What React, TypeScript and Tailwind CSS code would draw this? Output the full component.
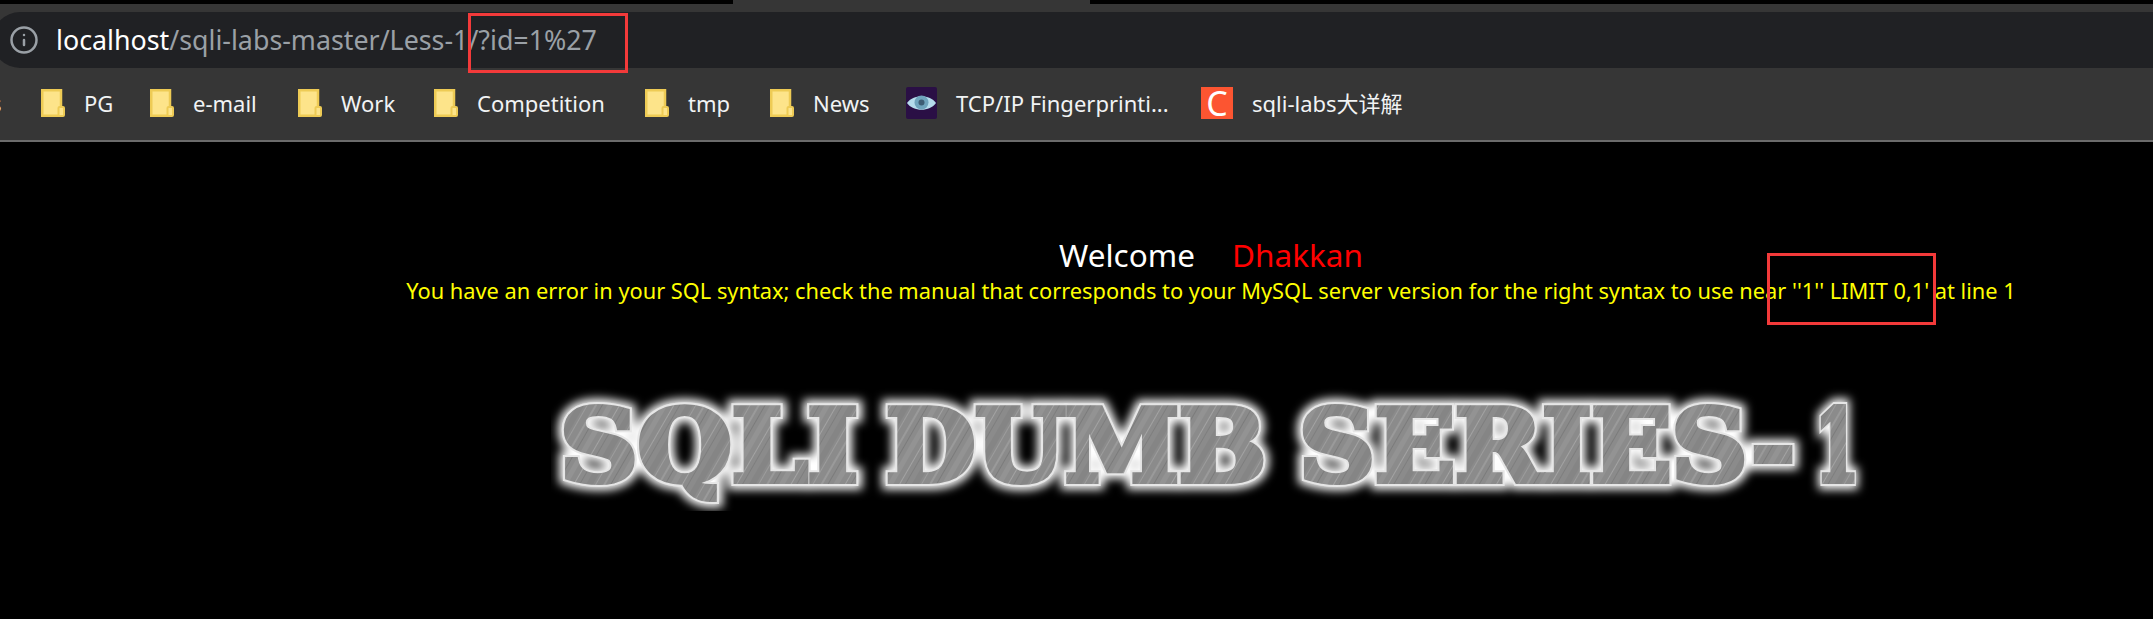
import { Info } from 'lucide-react';

const uiFont = "font-['Noto_Sans','Noto_Sans_CJK_SC',sans-serif]";

function Folder() {
  return (
    <svg width="24" height="28" viewBox="0 0 24 28" className="shrink-0">
      <path d="M1.25 1.25H20V26.75H1.25Z" fill="#fde48a" stroke="#eecb55" strokeWidth="2.5" />
      <rect x="17.5" y="18" width="5.5" height="9" rx="1" fill="#fde48a" stroke="#eecb55" strokeWidth="2" />
    </svg>
  );
}

function EyeIcon() {
  return (
    <svg width="31" height="32" viewBox="0 0 31 32" className="shrink-0">
      <rect width="31" height="32" rx="2" fill="#2a0f45" />
      <path d="M1 16C7 7 24 7 30 16C24 25 7 25 1 16Z" fill="#b5dcec" />
      <circle cx="15.5" cy="15.5" r="7" fill="#6fa4bd" />
      <circle cx="15.5" cy="15.5" r="3" fill="#3d5d74" />
    </svg>
  );
}

function Bookmark({ label, icon, width }: { label: string; icon: React.ReactNode; width: string }) {
  return (
    <div className={`flex shrink-0 items-center gap-[19px] ${width}`}>
      {icon}
      <span className="text-[22px] whitespace-nowrap text-[#f1f3f4]">{label}</span>
    </div>
  );
}

const logoWords = [
  { text: 'SQLI', x: 9, len: 298 },
  { text: 'DUMB', x: 335, len: 380 },
  { text: 'SERIES-', x: 748, len: 496 },
  { text: '1', x: 1264, len: 44 },
];

function LogoLayer(props: React.SVGProps<SVGTextElement>) {
  return (
    <>
      {logoWords.map((w) => (
        <text
          key={w.text}
          x={w.x}
          y={100}
          textLength={w.len}
          lengthAdjust="spacingAndGlyphs"
          fontFamily="'DejaVu Serif', serif"
          fontWeight={700}
          fontSize={100}
          {...props}
        >
          {w.text}
        </text>
      ))}
    </>
  );
}

function Logo() {
  return (
    <svg width="1320" height="130" viewBox="0 0 1320 130" className="block">
      <defs>
        <filter id="glow" x="-5%" y="-30%" width="110%" height="160%">
          <feGaussianBlur stdDeviation="5" />
        </filter>
        <pattern id="brushed" width="47" height="47" patternUnits="userSpaceOnUse" patternTransform="rotate(30)">
          <rect width="47" height="47" fill="#8b8b8b" />
          <rect x="3" width="2" height="47" fill="#9a9a9a" />
          <rect x="9" width="1" height="47" fill="#7b7b7b" />
          <rect x="14" width="5" height="47" fill="#939393" />
          <rect x="24" width="1" height="47" fill="#a3a3a3" />
          <rect x="29" width="1" height="47" fill="#7e7e7e" />
          <rect x="35" width="6" height="47" fill="#858585" />
          <rect x="43" width="1" height="47" fill="#9c9c9c" />
        </pattern>
      </defs>
      <g filter="url(#glow)">
        <LogoLayer fill="#fff" stroke="#fff" strokeWidth={17} />
      </g>
      <LogoLayer fill="#e6e6e6" stroke="#e6e6e6" strokeWidth={10} />
      <LogoLayer fill="url(#brushed)" stroke="url(#brushed)" strokeWidth={6} />
    </svg>
  );
}

export default function App() {
  return (
    <div className={`relative h-[619px] w-full overflow-hidden bg-black ${uiFont}`}>
      {/* window strip, the gray part is the active tab */}
      <div className="flex h-1">
        <div className="w-[733px] rounded-br-lg bg-black" />
        <div className="w-[357px] bg-[#363636]" />
        <div className="flex-1 rounded-bl-lg bg-black" />
      </div>

      <div className="border-b-2 border-[#6b6b6b] bg-[#363636] pt-2">
        <div className="-ml-2 flex h-14 items-center rounded-l-[28px] bg-[#202124] pl-[17px]">
          <Info size={30} strokeWidth={2} className="text-[#9aa0a6]" />
          <div className="ml-[17px] text-[26.8px] leading-none whitespace-nowrap text-[#9aa0a6]">
            <span className="text-white">localhost</span>/sqli-labs-master/Less-1/?id=1%27
          </div>
        </div>
        <div className="flex h-[72px] items-center overflow-hidden pb-[2px]">
          {/* previous bookmark's label, cut off by the window edge */}
          <div className="-ml-[9px] w-[50px] shrink-0 text-[22px] text-[#f1f3f4]">s</div>
          <Bookmark label="PG" icon={<Folder />} width="w-[109px]" />
          <Bookmark label="e-mail" icon={<Folder />} width="w-[148px]" />
          <Bookmark label="Work" icon={<Folder />} width="w-[136px]" />
          <Bookmark label="Competition" icon={<Folder />} width="w-[211px]" />
          <Bookmark label="tmp" icon={<Folder />} width="w-[125px]" />
          <Bookmark label="News" icon={<Folder />} width="w-[136px]" />
          <Bookmark label="TCP/IP Fingerprinti..." icon={<EyeIcon />} width="w-[295px]" />
          <Bookmark
            label="sqli-labs大详解"
            icon={
              <div className="flex h-8 w-8 shrink-0 items-center justify-center bg-[#fc5531] text-[34px] leading-none text-white">
                C
              </div>
            }
            width="w-[240px]"
          />
        </div>
      </div>

      <div className="flex flex-col items-center pl-[269px] pt-[93px]">
        <div className="flex items-center gap-[37px] text-[31.5px] leading-[40px]">
          <span className="text-white">Welcome</span>
          <span className="text-[#ff0000]">Dhakkan</span>
        </div>
        <p className="text-[21.8px] leading-[32px] whitespace-nowrap text-[#ffff00]">
          You have an error in your SQL syntax; check the manual that corresponds to your MySQL server version for the
          right syntax to use near ''1'' LIMIT 0,1' at line 1
        </p>
        <div className="mt-[74px]">
          <Logo />
        </div>
      </div>

      {/* red annotation boxes drawn on the screenshot */}
      <div className="absolute left-[468px] top-[13px] h-[60px] w-[160px] border-[3px] border-[#f33a3a]" />
      <div className="absolute left-[1767px] top-[253px] h-[72px] w-[169px] border-[3px] border-[#f33a3a]" />
    </div>
  );
}
